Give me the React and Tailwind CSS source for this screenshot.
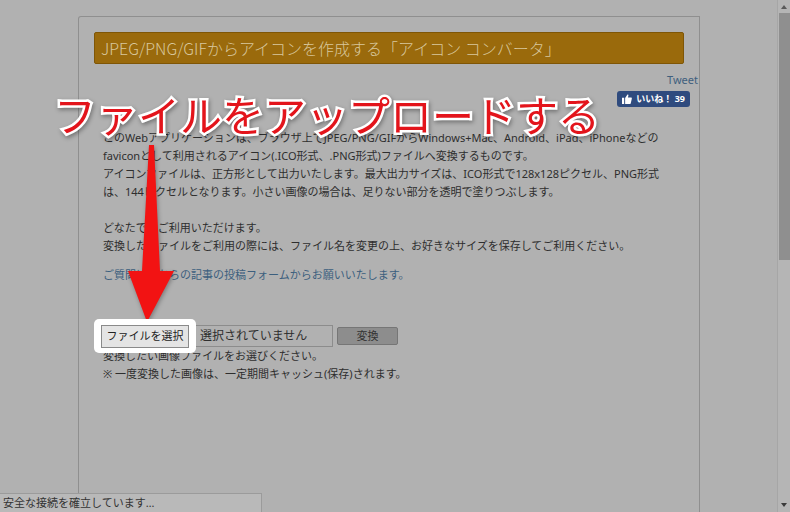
import React from 'react';

const ThumbIcon = () => (
    <svg width="10" height="10" viewBox="0 0 16 16" fill="#fff">
        <rect x="0" y="6" width="3.5" height="10" />
        <path d="M5 6.5 L8.5 1 C9.6 0.6 10.6 1.4 10.2 2.8 L9.4 5.5 H14.2 C15.3 5.5 16 6.4 15.7 7.4 L14 14.6 C13.8 15.4 13.1 16 12.3 16 H5 Z" />
    </svg>
);

const App = () => {
    return (
        <div className="relative h-[512px] w-[790px] overflow-hidden bg-[#b1b1b1] font-['Noto_Sans','Noto_Sans_CJK_JP',sans-serif] text-[#2e2e2e]">
            <div className="flex h-full">
                {/* ─── Page ─────────────────────────────────────────── */}
                <div className="flex-1 pl-[78px] pt-[16px]">
                    <div className="h-full w-[622px] rounded-tl-[3px] border border-b-0 border-[#8f8f8f] px-[15px] pt-[15px]">
                        <div className="h-[32px] rounded-[2px] border border-[#7f5606] bg-[#9a6a0c] pl-[6px] text-[16px] leading-[30px] text-[#d8c79c] font-['Noto_Sans_CJK_JP',sans-serif] font-light">
                            JPEG/PNG/GIFからアイコンを作成する「アイコン コンバータ」
                        </div>

                        <div className="-mr-[14px] mt-[9px] flex justify-end text-[11px] leading-[14px] text-[#40607e]">
                            Tweet
                        </div>
                        <div className="-mr-[6px] mt-[4px] flex justify-end">
                            <div className="flex h-[16px] items-center gap-[4px] rounded-[3px] bg-[#2f4b7e] px-[5px] text-[9px] font-bold text-white">
                                <ThumbIcon />
                                <span>いいね！ 39</span>
                            </div>
                        </div>

                        <div className="pl-[9px] text-[11px] leading-[18px] whitespace-nowrap">
                            <p className="mt-[22px]">
                                このWebアプリケーションは、ブラウザ上でJPEG/PNG/GIFからWindows+Mac、Android、iPad、iPhoneなどの<br />
                                faviconとして利用されるアイコン(.ICO形式、.PNG形式)ファイルへ変換するものです。<br />
                                アイコンファイルは、正方形として出力いたします。最大出力サイズは、ICO形式で128x128ピクセル、PNG形式<br />
                                は、144ピクセルとなります。小さい画像の場合は、足りない部分を透明で塗りつぶします。
                            </p>
                            <p className="mt-[18px]">
                                どなたでもご利用いただけます。<br />
                                変換したファイルをご利用の際には、ファイル名を変更の上、お好きなサイズを保存してご利用ください。
                            </p>
                            <p className="mt-[11px] text-[#3c5f7e]">ご質問はこちらの記事の投稿フォームからお願いいたします。</p>

                            {/* ─── File row ─────────────────────────────── */}
                            <div className="mt-[41px] flex h-[22px] items-center">
                                <div className="relative z-10 -ml-[9px] flex h-[34px] items-center rounded-[5px] bg-white px-[7px]">
                                    <div className="flex h-[23px] w-[88px] items-center justify-center border border-[#8a8a8a] bg-[#e4e4e4] text-[11px] text-[#222]">
                                        ファイルを選択
                                    </div>
                                </div>
                                <div className="-ml-[6px] flex h-[22px] w-[143px] items-center border border-[#8c8c8c] pl-[9px] text-[12px]">
                                    選択されていません
                                </div>
                                <div className="ml-[4px] flex h-[18px] w-[61px] items-center justify-center rounded-[2px] border border-[#767676] bg-[#8d8d8d] text-[11px] text-[#333]">
                                    変換
                                </div>
                            </div>
                            <p className="mt-0">
                                変換したい画像ファイルをお選びください。<br />
                                ※ 一度変換した画像は、一定期間キャッシュ(保存)されます。
                            </p>
                        </div>
                    </div>
                </div>

                {/* ─── Scrollbar ────────────────────────────────────── */}
                <div className="flex h-full w-[13px] flex-col items-center border-l border-[#a6a6a6] bg-[#b5b5b5]">
                    <div className="mt-[5px] h-0 w-0 border-x-[3px] border-b-[4px] border-x-transparent border-b-[#5a5a5a]" />
                    <div className="mt-[4px] h-[247px] w-[11px] bg-[#8f8f8f]" />
                    <div className="flex-1" />
                    <div className="mb-[5px] h-0 w-0 border-x-[3px] border-t-[4px] border-x-transparent border-t-[#3a3a3a]" />
                </div>
            </div>

            {/* ─── Annotation: caption ──────────────────────────────── */}
            <div className="absolute left-[54px] top-[93px] text-[42px] font-normal leading-none text-[#e3141b] font-['Noto_Sans_CJK_JP',sans-serif] [-webkit-text-stroke:5px_#fff] [paint-order:stroke_fill] [filter:drop-shadow(1px_2px_2px_rgba(0,0,0,0.35))]">
                ファイルをアップロードする
            </div>

            {/* ─── Annotation: arrow ────────────────────────────────── */}
            <svg className="absolute left-[120px] top-[140px] [filter:drop-shadow(1px_2px_2px_rgba(0,0,0,0.3))]" width="60" height="190" viewBox="0 0 60 190">
                <polygon points="29,5 34,5 40,131 54,131 27,182 8,131 22,131" fill="#f21313" />
            </svg>

            {/* ─── Status bar ───────────────────────────────────────── */}
            <div className="absolute bottom-0 left-0 flex h-[19px] w-[262px] items-center border-r border-t border-[#9b9b9b] bg-[#b9b9b9] pl-[3px] text-[11px] text-[#333]">
                安全な接続を確立しています…
            </div>
        </div>
    );
};

export default App;
